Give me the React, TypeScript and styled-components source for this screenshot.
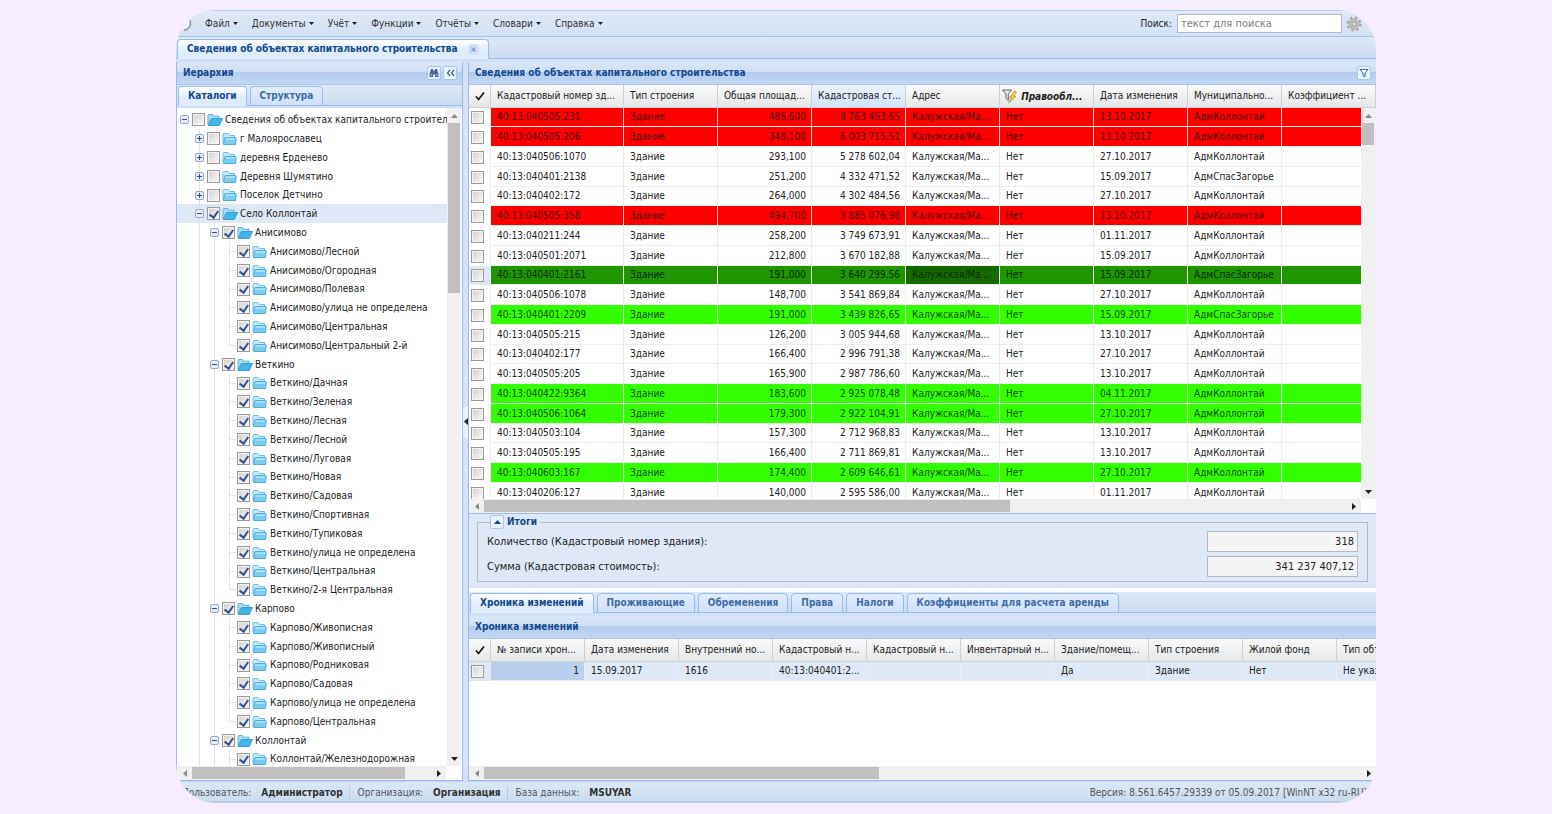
import React from "react";
import styled, { createGlobalStyle, css } from "styled-components";

const FONT = '"DejaVu Sans Condensed", "DejaVu Sans", sans-serif';

const Global = createGlobalStyle`
  * { box-sizing: border-box; }
  body { margin: 0; background: #f5edfe; }
  body, button, input, table { font: 10px/14px ${FONT}; color: #222; }
  ul { list-style: none; margin: 0; padding: 0; }
`;

const Page = styled.div`
  height: 100vh;
  padding: 10px 176px 11px;
  overflow: hidden;
`;

const Shell = styled.main`
  height: 100%;
  display: flex;
  flex-direction: column;
  overflow: hidden;
  border-radius: 40px;
  background: #d3e1f4;
`;

/* ---- top menu ---- */

const MenuBar = styled.header`
  flex: none;
  height: 27px;
  display: flex;
  align-items: center;
  padding: 0 6px;
  border-top: 1px solid #b4cef0;
  border-bottom: 1px solid #a6c3ea;
  background: linear-gradient(#dfe9f7, #d3e2f4);
`;

const MenuNav = styled.nav`
  display: flex;
  gap: 14px;
  margin-left: 12px;
  flex: 1;
`;

const MenuButton = styled.button`
  display: flex;
  align-items: center;
  gap: 3px;
  padding: 0;
  border: 0;
  background: none;
  color: #333;
`;

const SearchLabel = styled.label`
  margin-right: 5px;
`;

const SearchInput = styled.input`
  width: 165px;
  height: 19px;
  padding: 0 3px;
  border: 1px solid #b5b8c8;
  background: #fff;
  font-size: 11px;
  &::placeholder { color: #808080; opacity: 1; }
`;

const GearButton = styled.button`
  display: flex;
  align-items: center;
  gap: 3px;
  margin-left: 4px;
  padding: 0;
  border: 0;
  background: none;
`;

/* ---- tabs ---- */

const TabStrip = styled.div<{ $h: number; $edge: number }>`
  flex: none;
  height: ${(p) => p.$h}px;
  display: flex;
  align-items: flex-end;
  gap: 3px;
  padding: 0 1px;
  border-bottom: ${(p) => p.$edge}px solid #d0e0f7;
  background: linear-gradient(#dde8f6, #cbdcf1);
  box-shadow: inset 0 -1px 0 #99bce8;
`;

const Tab = styled.button<{ $active?: boolean }>`
  height: 20px;
  display: flex;
  align-items: center;
  gap: 10px;
  padding: 0 9px;
  border: 1px solid #99bce8;
  border-bottom-color: ${(p) => (p.$active ? "#deecfd" : "#99bce8")};
  border-radius: 4px 4px 0 0;
  background: ${(p) => (p.$active ? "linear-gradient(#fff, #deecfd 60%)" : "linear-gradient(#e1edfd, #cfe0f8)")};
  color: ${(p) => (p.$active ? "#15498b" : "#416da3")};
  font-weight: bold;
  white-space: nowrap;
`;

/* ---- panels ---- */

const Workspace = styled.div`
  flex: 1;
  min-height: 0;
  display: flex;
`;

const Side = styled.section`
  flex: none;
  width: 287px;
  display: flex;
  flex-direction: column;
  border: solid #99bce8;
  border-width: 0 1px 1px;
`;

const Splitter = styled.div`
  flex: none;
  width: 5px;
  display: flex;
  align-items: center;
  background: #d6e3f6;
`;

const SplitHandle = styled.button`
  width: 5px;
  height: 32px;
  display: grid;
  place-items: center;
  padding: 0;
  border: 0;
  border-radius: 4px 0 0 4px;
  background: #e9f0fa;
`;

const Content = styled.section`
  flex: 1;
  min-width: 0;
  display: flex;
  flex-direction: column;
  border-left: 1px solid #99bce8;
  border-bottom: 1px solid #99bce8;
  background: #fff;
`;

const PanelHeader = styled.div`
  flex: none;
  height: 23px;
  display: flex;
  align-items: center;
  gap: 2px;
  padding: 0 5px 0 6px;
  border-bottom: 1px solid #a9c6ec;
  background: linear-gradient(#dbe7f7, #cfdff4 45%, #b2cbee 46%, #c3d8f4);
`;

const PanelTitle = styled.h2`
  flex: 1;
  margin: 0;
  font-size: 10px;
  line-height: 14px;
  color: #15498b;
`;

const ToolButton = styled.button`
  width: 14px;
  height: 14px;
  display: grid;
  place-items: center;
  padding: 0;
  border: 1px solid #a9c6ec;
  border-radius: 2px;
  background: #e9f1fc;
`;

/* ---- scrollbars ---- */

const Bar = styled.div<{ $vertical?: boolean }>`
  flex: none;
  display: flex;
  flex-direction: ${(p) => (p.$vertical ? "column" : "row")};
  ${(p) => (p.$vertical ? "width: 14px;" : "height: 14px;")}
  background: #f0f0f0;
`;

const BarButton = styled.button`
  flex: none;
  width: 15px;
  height: 15px;
  display: grid;
  place-items: center;
  padding: 0;
  border: 0;
  background: none;
`;

const BarTrack = styled.div<{ $vertical?: boolean }>`
  flex: 1;
  display: flex;
  flex-direction: ${(p) => (p.$vertical ? "column" : "row")};
  padding: ${(p) => (p.$vertical ? "0 1px" : "1px 0")};
`;

const BarThumb = styled.div`
  background: #c0c0c0;
`;

const BarRow = styled.div`
  flex: none;
  display: flex;
  background: #fff;
  & > div { flex: 1; }
`;

const Corner = styled.span<{ $w: number }>`
  flex: none;
  width: ${(p) => p.$w}px;
`;

/* ---- tree ---- */

const TreeBody = styled.div`
  flex: 1;
  min-height: 0;
  display: flex;
  background: #fff;
`;

const TreeList = styled.ul`
  flex: 1;
  min-width: 0;
  overflow: hidden;
  && { padding-top: 2px; }
`;

const TreeRow = styled.li<{ $selected?: boolean }>`
  height: 19px;
  display: flex;
  align-items: center;
  white-space: nowrap;
  background: ${(p) => (p.$selected ? "#dfe8f6" : "none")};
  &:nth-child(5n) { height: 18px; }
`;

const Guide = styled.span<{ $line?: boolean; $elbow?: boolean; $end?: boolean }>`
  flex: none;
  align-self: stretch;
  width: 15px;
  display: grid;
  place-items: center;
  background-repeat: no-repeat;
  ${(p) =>
    p.$line &&
    css`
      background-image: linear-gradient(#e4e4e4, #e4e4e4)${p.$elbow ? ", linear-gradient(#e4e4e4, #e4e4e4)" : ""};
      background-size: 1px ${p.$end ? "50%" : "100%"}${p.$elbow ? ", 7px 1px" : ""};
      background-position: 7px 0${p.$elbow ? ", 7px 9px" : ""};
    `}
`;

const TreeLabel = styled.label`
  display: flex;
  align-items: center;
  gap: 2px;
`;

const Check = styled.input`
  appearance: none;
  flex: none;
  width: 13px;
  height: 13px;
  margin: 0;
  display: grid;
  place-items: center;
  border: 1px solid #9a9a9a;
  background: linear-gradient(135deg, #cfcfcf, #fafafa);
  box-shadow: inset 0 0 0 1px #f4f4f4;
  &:checked::after {
    content: "";
    width: 4px;
    height: 7px;
    margin-top: -1px;
    border: solid #34508f;
    border-width: 0 2px 2px 0;
    transform: rotate(35deg);
  }
`;

/* ---- grids ---- */

const GridArea = styled.div<{ $grow?: boolean }>`
  position: relative;
  overflow: hidden;
  background: #fff;
  ${(p) => (p.$grow ? "flex: 1; min-height: 0;" : "flex: none; height: 414px;")}
`;

const Table = styled.table<{ $min?: number }>`
  width: 100%;
  min-width: ${(p) => p.$min ?? 0}px;
  table-layout: fixed;
  border-collapse: separate;
  border-spacing: 0;
`;

const Th = styled.th<{ $sorted?: boolean; $filtered?: boolean }>`
  height: 23px;
  padding: 0 0 0 ${(p) => (p.$filtered ? 2 : 6)}px;
  border-right: 1px solid #cfcfcf;
  border-bottom: 1px solid #d0d0d0;
  background: ${(p) => (p.$sorted ? "linear-gradient(#ebf3fd, #d3e5fa)" : "linear-gradient(#f9f9f9, #e6e7e9)")};
  font-weight: ${(p) => (p.$filtered ? "bold" : "normal")};
  font-style: ${(p) => (p.$filtered ? "italic" : "normal")};
  text-align: left;
  white-space: nowrap;
  & svg { vertical-align: middle; }
`;

type Tone = "red" | "green" | "dark" | "pick" | undefined;
const tones = { red: "#ff0000", green: "#33ff00", dark: "#1f9600", pick: "#dfe8f6" };
const inks = { red: "#500000", green: "#0f4d00", dark: "#062b00", pick: "#222" };

const Tr = styled.tr<{ $tone: Tone }>`
  height: 20px;
  color: ${(p) => (p.$tone ? inks[p.$tone] : "#222")};
  & > td { background: ${(p) => (p.$tone ? tones[p.$tone] : "#fff")}; }
  & > td:first-child { background: ${(p) => (p.$tone === "dark" || p.$tone === "pick" ? "#dfe8f6" : "#fff")}; }
  &:nth-child(4n + 1) { height: 19px; }
`;

const Td = styled.td<{ $right?: boolean; $focus?: string }>`
  padding: 0 5px 0 6px;
  border-right: 1px solid #ededed;
  border-bottom: 1px solid #ededed;
  line-height: 12px;
  text-align: ${(p) => (p.$right ? "right" : "left")};
  white-space: nowrap;
  && { ${(p) => p.$focus && `background: ${p.$focus};`} }
`;

const CheckTd = styled.td`
  padding: 0 0 0 2px;
  border-right: 1px solid #ededed;
`;

const GridScroll = styled.div`
  position: absolute;
  top: 23px;
  right: 0;
  bottom: 0;
  width: 15px;
  display: flex;
  background: #f0f0f0;
`;

/* ---- totals ---- */

const Totals = styled.div`
  flex: none;
  padding: 1px 8px 6px;
  border-top: 1px solid #99bce8;
  border-bottom: 4px solid #fff;
  background: #dfe8f6;
`;

const Fieldset = styled.fieldset`
  display: flex;
  flex-direction: column;
  gap: 4px;
  margin: 0;
  padding: 2px 9px 4px;
  border: 1px solid #b5b8c8;
`;

const Legend = styled.legend`
  display: flex;
  align-items: center;
  gap: 3px;
  margin-left: 3px;
  padding: 0 3px 0 0;
  color: #15498b;
  font-weight: bold;
`;

const Field = styled.label`
  display: flex;
  align-items: center;
  justify-content: space-between;
  font-size: 11px;
`;

const FieldInput = styled.input`
  width: 151px;
  height: 21px;
  padding: 0 3px;
  border: 1px solid #b5b8c8;
  background: #f4f4f4;
  font-size: 11px;
  text-align: right;
`;

/* ---- status ---- */

const Status = styled.footer`
  flex: none;
  height: 22px;
  display: flex;
  align-items: center;
  gap: 8px;
  padding: 3px 9px 0 6px;
  border-top: 1px solid #c3d7f2;
  border-bottom: 2px solid #b9cde4;
  background: linear-gradient(#dce8f6, #cbdcf0);
  color: #555;
  white-space: nowrap;
`;

const StatusItem = styled.span`
  display: flex;
  gap: 10px;
  padding-right: 6px;
  border-right: 1px solid #b3cbe9;
  &:nth-of-type(3) { border: 0; flex: 1; }
  & b { color: #333; }
`;

/* ---- drawings ---- */

const Arrow = ({ dir, color = "#222" }: { dir: "up" | "down" | "left" | "right" | "menu"; color?: string }) => {
  const d = {
    up: "M0 5 3.500 1 7 5z",
    down: "M0 1h7L3.500 5z",
    menu: "M0 1h5L2.500 4z",
    left: "M5 0v7L1 3.500z",
    right: "M1 0v7l4-3.500z",
  }[dir];
  const [w, h] = dir === "menu" ? [5, 5] : dir === "up" || dir === "down" ? [7, 6] : [6, 7];
  return (
    <svg width={w} height={h} aria-hidden="true">
      <path d={d} fill={color} />
    </svg>
  );
};

const Folder = ({ open }: { open?: boolean }) => (
  <svg width="16" height="14" viewBox="0 0 16 14" aria-hidden="true">
    {open ? (
      <>
        <path d="M1 12V2.500Q1 1.500 2 1.500h3.500l1.300 1.700H12V6H4z" fill="#a5dcf5" stroke="#5ab4de" />
        <path d="M1.300 12.500 4.600 5.500H15.500L12.300 12.500z" fill="#45b4e8" stroke="#3a9fd4" />
      </>
    ) : (
      <>
        <path d="M1 11.500V2.500Q1 1.500 2 1.500h4L7.500 3.500h5V6" fill="#c5eafa" stroke="#6cc0e6" />
        <path d="M1.500 12.500 2.500 6Q2.700 5.500 3.500 5.500h10q.8 0 .7.800L13.500 12.500z" fill="#7bcdf0" stroke="#4dacd9" />
        <path d="M3.500 7h9.500" stroke="#d2effb" />
      </>
    )}
  </svg>
);

const Expander = ({ open }: { open?: boolean }) => (
  <svg width="9" height="9" aria-hidden="true">
    <rect x=".5" y=".5" width="8" height="8" rx="1.500" fill="#e6ecf6" stroke="#9aa9c2" />
    <path d={open ? "M2 4.500h5" : "M2 4.500h5M4.500 2v5"} stroke="#3a4f7a" />
  </svg>
);

const Tick = () => (
  <svg width="10" height="10" aria-hidden="true">
    <path d="M1 5.500 3.500 8.500 9 1.500" fill="none" stroke="#111" strokeWidth="1.600" />
  </svg>
);

const Gear = () => (
  <svg width="16" height="16" viewBox="0 0 16 16" aria-hidden="true">
    <circle cx="8" cy="8" r="6.300" fill="none" stroke="#a2a2a2" strokeWidth="2.400" strokeDasharray="2.500 2.450" />
    <circle cx="8" cy="8" r="4.200" fill="#d9d9d9" stroke="#b8b8b8" strokeWidth="3" />
    <circle cx="8" cy="8" r="2" fill="#eef3fa" stroke="#8e8e8e" />
  </svg>
);

const Logo = () => (
  <svg width="11" height="18" viewBox="0 0 11 18" aria-hidden="true">
    <path d="M8 5q1.500 5-1 7.500t-5 3" fill="none" stroke="#8a94a6" strokeWidth="1.500" />
    <path d="M6 5q1 4-1 6t-4 2" fill="none" stroke="#fff" strokeWidth="2" />
  </svg>
);

const Binoculars = () => (
  <svg width="10" height="10" viewBox="0 0 10 10" aria-hidden="true">
    <path d="M2 1h2v1.500h2V1h2l1.500 5v3H6V6.500H4V9H.5V6z" fill="#4a6a9c" />
    <path d="M1.500 7h1.500M7 7h1.500" stroke="#cfe0f5" />
  </svg>
);

const Chevrons = () => (
  <svg width="9" height="8" aria-hidden="true">
    <path d="M4 1 1.500 4 4 7M8 1 5.500 4 8 7" fill="none" stroke="#3c5f94" strokeWidth="1.200" />
  </svg>
);

const Funnel = () => (
  <svg width="10" height="10" viewBox="0 0 10 10" aria-hidden="true">
    <path d="M1 1.500h8L6 5v4L4 7.500V5z" fill="#fff" stroke="#3567ab" />
  </svg>
);

const FilterBolt = () => (
  <svg width="16" height="15" viewBox="0 0 16 15" aria-hidden="true">
    <path d="M.5 1h9L6.300 5v6.500L4 9.500V5z" fill="#e8e8e8" stroke="#666" />
    <path d="M12.500 2 7.500 8.500H10L6.500 14 14 7H11L14.500 3z" fill="#f7d54a" stroke="#a98a1c" strokeWidth=".7" />
  </svg>
);

const CloseMark = () => (
  <svg width="11" height="11" aria-hidden="true">
    <rect width="11" height="11" rx="3" fill="#d3e2f6" />
    <path d="M3.500 3.500l4 4M7.500 3.500l-4 4" stroke="#7f9fca" strokeWidth="1.300" />
  </svg>
);

/* ---- data ---- */

const menus = ["Файл", "Документы", "Учёт", "Функции", "Отчёты", "Словари", "Справка"];

type Node = [level: number, text: string, opened?: boolean];
const leaves = (town: string, names: string[]): Node[] => names.map((n) => [3, `${town}/${n}`]);

const tree: Node[] = [
  [0, "Сведения об объектах капитального строител", true],
  [1, "г Малоярославец", false],
  [1, "деревня Ерденево", false],
  [1, "Деревня Шумятино", false],
  [1, "Поселок Детчино", false],
  [1, "Село Коллонтай", true],
  [2, "Анисимово", true],
  ...leaves("Анисимово", ["Лесной", "Огородная", "Полевая", "улица не определена", "Центральная", "Центральный 2-й"]),
  [2, "Веткино", true],
  ...leaves("Веткино", ["Дачная", "Зеленая", "Лесная", "Лесной", "Луговая", "Новая", "Садовая", "Спортивная", "Тупиковая", "улица не определена", "Центральная", "2-я Центральная"]),
  [2, "Карпово", true],
  ...leaves("Карпово", ["Живописная", "Живописный", "Родниковая", "Садовая", "улица не определена", "Центральная"]),
  [2, "Коллонтай", true],
  ...leaves("Коллонтай", ["Железнодорожная"]),
];

type Building = [id: string, area: string, cost: string, date: string, town: string, tone?: Tone];
const K = "АдмКоллонтай";
const S = "АдмСпасЗагорье";
const buildings: Building[] = [
  ["40:13:040505:231", "486,600", "8 763 453,65", "13.10.2017", K, "red"],
  ["40:13:040505:206", "348,100", "6 003 715,51", "13.10.2017", K, "red"],
  ["40:13:040506:1070", "293,100", "5 278 602,04", "27.10.2017", K],
  ["40:13:040401:2138", "251,200", "4 332 471,52", "15.09.2017", S],
  ["40:13:040402:172", "264,000", "4 302 484,56", "27.10.2017", K],
  ["40:13:040505:358", "494,700", "3 885 076,98", "13.10.2017", K, "red"],
  ["40:13:040211:244", "258,200", "3 749 673,91", "01.11.2017", K],
  ["40:13:040501:2071", "212,800", "3 670 182,88", "15.09.2017", K],
  ["40:13:040401:2161", "191,000", "3 640 299,56", "15.09.2017", S, "dark"],
  ["40:13:040506:1078", "148,700", "3 541 869,84", "27.10.2017", K],
  ["40:13:040401:2209", "191,000", "3 439 826,65", "15.09.2017", S, "green"],
  ["40:13:040505:215", "126,200", "3 005 944,68", "13.10.2017", K],
  ["40:13:040402:177", "166,400", "2 996 791,38", "27.10.2017", K],
  ["40:13:040505:205", "165,900", "2 987 786,60", "13.10.2017", K],
  ["40:13:040422:9364", "183,600", "2 925 078,48", "04.11.2017", K, "green"],
  ["40:13:040506:1064", "179,300", "2 922 104,91", "27.10.2017", K, "green"],
  ["40:13:040503:104", "157,300", "2 712 968,83", "13.10.2017", K],
  ["40:13:040505:195", "166,400", "2 711 869,81", "13.10.2017", K],
  ["40:13:040603:167", "174,400", "2 609 646,61", "27.10.2017", K, "green"],
  ["40:13:040206:127", "140,000", "2 595 586,00", "01.11.2017", K],
];

const columns = [
  "Кадастровый номер зд...",
  "Тип строения",
  "Общая площад...",
  "Кадастровая ст...",
  "Адрес",
  "Правообл...",
  "Дата изменения",
  "Муниципально...",
  "Коэффициент ...",
];

const history: [string, string][] = [
  ["№ записи хрон...", "1"],
  ["Дата изменения", "15.09.2017"],
  ["Внутренний но...", "1616"],
  ["Кадастровый н...", "40:13:040401:2..."],
  ["Кадастровый н...", ""],
  ["Инвентарный н...", ""],
  ["Здание/помещ...", "Да"],
  ["Тип строения", "Здание"],
  ["Жилой фонд", "Нет"],
  ["Тип объ", "Не указ"],
];

const detailTabs = ["Хроника изменений", "Проживающие", "Обременения", "Права", "Налоги", "Коэффициенты для расчета аренды"];

/* ---- components ---- */

const Scrollbar = ({ vertical, size }: { vertical?: boolean; size: number }) => (
  <Bar $vertical={vertical}>
    <BarButton aria-label={vertical ? "Вверх" : "Влево"}>
      <Arrow dir={vertical ? "up" : "left"} color="#8a8a8a" />
    </BarButton>
    <BarTrack $vertical={vertical}>
      <BarThumb style={{ flexBasis: `${size}%` }} />
    </BarTrack>
    <BarButton aria-label={vertical ? "Вниз" : "Вправо"}>
      <Arrow dir={vertical ? "down" : "right"} />
    </BarButton>
  </Bar>
);

const TreeItem = ({ node, index }: { node: Node; index: number }) => {
  const [level, text, opened] = node;
  const next = tree[index + 1];
  const isLeaf = opened === undefined;
  return (
    <TreeRow $selected={index === 5} role="treeitem" aria-level={level + 1}>
      {Array.from({ length: level }, (_, i) => (
        <Guide key={i} $line={i > 0} />
      ))}
      <Guide $line={level > 0} $elbow={isLeaf} $end={isLeaf && !!next && next[0] < 3}>
        {!isLeaf && <Expander open={opened} />}
      </Guide>
      <TreeLabel>
        <Check type="checkbox" defaultChecked={index >= 5} />
        <Folder open={opened} />
        {text}
      </TreeLabel>
    </TreeRow>
  );
};

export default function App() {
  return (
    <Page>
      <Global />
      <Shell>
        <MenuBar>
          <Logo />
          <MenuNav>
            {menus.map((m) => (
              <MenuButton key={m}>
                {m}
                <Arrow dir="menu" />
              </MenuButton>
            ))}
          </MenuNav>
          <SearchLabel htmlFor="search">Поиск:</SearchLabel>
          <SearchInput id="search" placeholder="текст для поиска" />
          <GearButton aria-label="Настройки">
            <Gear />
            <Arrow dir="menu" />
          </GearButton>
        </MenuBar>
        <TabStrip $h={25} $edge={3}>
          <Tab $active>
            Сведения об объектах капитального строительства
            <CloseMark />
          </Tab>
        </TabStrip>

        <Workspace>
          <Side>
            <PanelHeader>
              <PanelTitle>Иерархия</PanelTitle>
              <ToolButton aria-label="Найти"><Binoculars /></ToolButton>
              <ToolButton aria-label="Свернуть"><Chevrons /></ToolButton>
            </PanelHeader>
            <TabStrip $h={23} $edge={2}>
              <Tab $active>Каталоги</Tab>
              <Tab>Структура</Tab>
            </TabStrip>
            <TreeBody>
              <TreeList role="tree">
                {tree.map((node, i) => (
                  <TreeItem key={i} node={node} index={i} />
                ))}
              </TreeList>
              <Scrollbar vertical size={27} />
              <Corner $w={1} />
            </TreeBody>
            <BarRow>
              <Scrollbar size={89} />
              <Corner $w={16} />
            </BarRow>
          </Side>

          <Splitter>
            <SplitHandle aria-label="Свернуть панель">
              <Arrow dir="left" />
            </SplitHandle>
          </Splitter>

          <Content>
            <PanelHeader>
              <PanelTitle>Сведения об объектах капитального строительства</PanelTitle>
              <ToolButton aria-label="Фильтр"><Funnel /></ToolButton>
            </PanelHeader>
            <GridArea>
              <Table>
                <colgroup>
                  <col style={{ width: 22 }} />
                  <col style={{ width: 133 }} />
                  {columns.slice(1).map((c) => (
                    <col key={c} style={{ width: 94 }} />
                  ))}
                </colgroup>
                <thead>
                  <tr>
                    <Th><Tick /></Th>
                    {columns.map((c, i) => (
                      <Th key={c} $sorted={i === 3} $filtered={i === 5}>
                        {i === 5 && <><FilterBolt /> </>}
                        {c}
                      </Th>
                    ))}
                  </tr>
                </thead>
                <tbody>
                  {buildings.map(([id, area, cost, date, town, tone]) => (
                    <Tr key={id} $tone={tone}>
                      <CheckTd><Check type="checkbox" aria-label={id} /></CheckTd>
                      <Td>{id}</Td>
                      <Td>Здание</Td>
                      <Td $right>{area}</Td>
                      <Td $right>{cost}</Td>
                      <Td $focus={tone === "dark" ? "#156900" : undefined}>Калужская/Ма...</Td>
                      <Td>Нет</Td>
                      <Td>{date}</Td>
                      <Td>{town}</Td>
                      <Td />
                    </Tr>
                  ))}
                </tbody>
              </Table>
              <GridScroll>
                <Scrollbar vertical size={6} />
              </GridScroll>
            </GridArea>
            <BarRow>
              <Scrollbar size={61} />
              <Corner $w={15} />
            </BarRow>

            <Totals>
              <Fieldset>
                <Legend>
                  <ToolButton aria-label="Свернуть итоги"><Arrow dir="up" color="#15498b" /></ToolButton>
                  Итоги
                </Legend>
                <Field>
                  Количество (Кадастровый номер здания):
                  <FieldInput readOnly value="318" />
                </Field>
                <Field>
                  Сумма (Кадастровая стоимость):
                  <FieldInput readOnly value="341 237 407,12" />
                </Field>
              </Fieldset>
            </Totals>

            <TabStrip $h={24} $edge={3}>
              {detailTabs.map((t, i) => (
                <Tab key={t} $active={i === 0}>{t}</Tab>
              ))}
            </TabStrip>
            <PanelHeader>
              <PanelTitle>Хроника изменений</PanelTitle>
            </PanelHeader>
            <GridArea $grow>
              <Table $min={962}>
                <colgroup>
                  <col style={{ width: 22 }} />
                  {history.map((_, i) => (
                    <col key={i} style={{ width: 94 }} />
                  ))}
                </colgroup>
                <thead>
                  <tr>
                    <Th><Tick /></Th>
                    {history.map(([h], i) => (
                      <Th key={i}>{h}</Th>
                    ))}
                  </tr>
                </thead>
                <tbody>
                  <Tr $tone="pick">
                    <CheckTd><Check type="checkbox" aria-label="Запись 1" /></CheckTd>
                    {history.map(([, v], i) => (
                      <Td key={i} $right={i === 0} $focus={i === 0 ? "#b8cfee" : undefined}>{v}</Td>
                    ))}
                  </Tr>
                </tbody>
              </Table>
            </GridArea>
            <Scrollbar size={45} />
          </Content>
        </Workspace>

        <Status>
          <StatusItem>Пользователь: <b>Администратор</b></StatusItem>
          <StatusItem>Организация: <b>Организация</b></StatusItem>
          <StatusItem>База данных: <b>MSUYAR</b></StatusItem>
          <span>Версия: 8.561.6457.29339 от 05.09.2017 [WinNT x32 ru-RU]</span>
        </Status>
      </Shell>
    </Page>
  );
}
